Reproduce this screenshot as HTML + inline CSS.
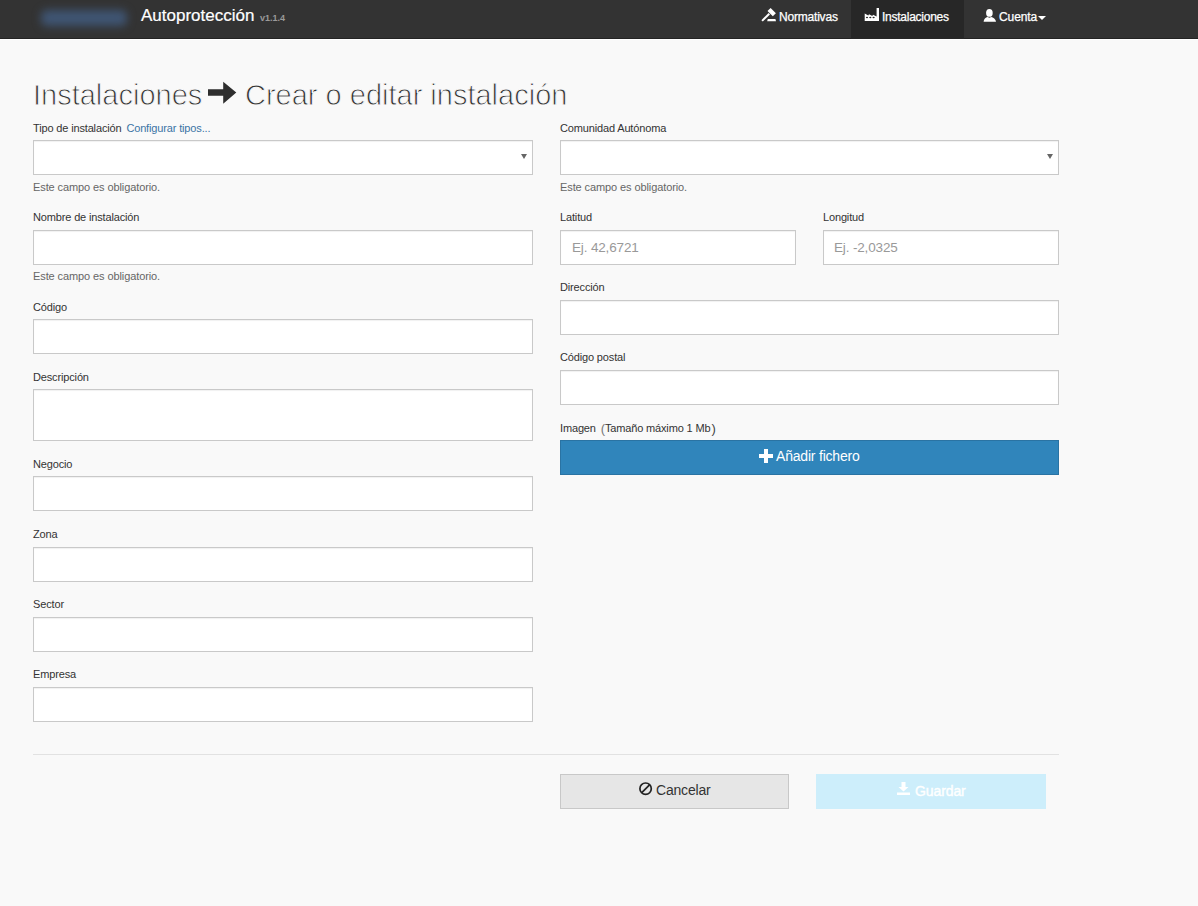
<!DOCTYPE html>
<html>
<head>
<meta charset="utf-8">
<style>
html,body{margin:0;padding:0;}
body{width:1198px;height:906px;overflow:hidden;background:#f9f9f9;position:relative;font-family:"Liberation Sans",sans-serif;color:#333;}
.a{position:absolute;white-space:nowrap;}
#nav{position:absolute;left:0;top:0;width:1198px;height:38px;background:#333;border-bottom:1px solid #242424;}
#navline{position:absolute;left:0;top:39px;width:1198px;height:1px;background:#fff;}
.logo{position:absolute;left:41px;top:10px;width:86px;height:16px;background:#3f5573;filter:blur(4px);border-radius:6px;}
.brand{font-size:17px;line-height:17px;color:#fff;-webkit-text-stroke:0.2px #fff;}
.ver{font-size:9px;line-height:9px;color:#9a9a9a;font-weight:bold;}
.nt{font-size:12px;line-height:12px;color:#fff;-webkit-text-stroke:0.25px #fff;}
.active{position:absolute;left:851px;top:0;width:113px;height:39px;background:#272727;}
h1{margin:0;font-weight:normal;font-size:29px;line-height:29px;color:#333;-webkit-text-stroke:0.9px #f9f9f9;}
.lbl{font-size:11px;line-height:11px;color:#333;letter-spacing:-0.15px;}
.help{font-size:11px;line-height:11px;color:#666;letter-spacing:-0.1px;}
.lnk{color:#3b74a5;margin-left:2px;}
.inp{position:absolute;box-sizing:border-box;background:#fff;border:1px solid #c9c9c9;box-shadow:inset 0 1px 1px rgba(0,0,0,.06);}
.ph{font-size:13.5px;line-height:14px;color:#999;letter-spacing:-0.15px;}
.caret{position:absolute;width:0;height:0;border-left:3px solid transparent;border-right:3px solid transparent;border-top:5px solid #666;}
</style>
</head>
<body>
<div id="nav"></div>
<div id="navline"></div>
<div class="logo"></div>
<div class="a brand" style="left:141px;top:7px;">Autoprotección</div>
<div class="a ver" style="left:260px;top:14px;">v1.1.4</div>

<div class="active"></div>
<!-- gavel icon -->
<svg class="a" style="left:758px;top:4px;" width="24" height="20" viewBox="0 0 24 20">
  <g fill="#fff">
    <polygon points="12.6,3.9 17.9,9.2 14.8,12.2 9.5,6.9"/>
    <polygon points="4.8,17.6 3.4,16.2 10.6,9.0 12.0,10.4"/>
    <polygon points="9.8,14.9 17.4,14.9 18,17.2 9.2,17.2"/>
  </g>
</svg>
<div class="a nt" style="left:779px;top:11px;letter-spacing:-0.2px;">Normativas</div>
<!-- factory icon -->
<svg class="a" style="left:860px;top:4px;" width="24" height="20" viewBox="0 0 24 20">
  <path fill="#fff" d="M4.7 16.9 V9.6 L8.3 11.6 L9 10.2 L12.3 12.1 L13 10.7 L16.6 12.6 V4 H19 V16.9 Z"/>
  <g fill="#2a2a2a"><ellipse cx="7" cy="13.5" rx="1.1" ry="0.7"/><ellipse cx="10.3" cy="13.5" rx="1.1" ry="0.7"/><ellipse cx="13.6" cy="13.5" rx="1.1" ry="0.7"/></g>
</svg>
<div class="a nt" style="left:882px;top:11px;letter-spacing:-0.25px;">Instalaciones</div>
<!-- user icon -->
<svg class="a" style="left:983px;top:9px;" width="14" height="13" viewBox="0 0 14 13">
  <g fill="#fff"><ellipse cx="6.4" cy="3.9" rx="3.3" ry="3.9"/><path d="M0.6 12.8 C0.8 9.6 2.6 8.6 4.6 7.9 L6.4 8.8 L8.2 7.9 C10.2 8.6 12.8 9.6 13 12.8 Z"/></g>
</svg>
<div class="a nt" style="left:999px;top:11px;letter-spacing:-0.1px;">Cuenta</div>
<div class="caret" style="left:1038px;top:16px;border-left:4px solid transparent;border-right:4px solid transparent;border-top:4px solid #fff;"></div>

<h1 class="a" style="left:33px;top:81px;">Instalaciones</h1>
<svg class="a" style="left:208px;top:81px;" width="30" height="24" viewBox="0 0 30 24">
  <path fill="#2e2e2e" d="M0 8.2 H15.2 V0.8 L28.3 11.6 L15.2 22.8 V14.8 H0 Z"/>
</svg>
<h1 class="a" style="left:245px;top:81px;">Crear o editar instalación</h1>

<!-- LEFT COLUMN -->
<div class="a lbl" style="left:33px;top:123px;">Tipo de instalación <span class="lnk">Configurar tipos...</span></div>
<div class="inp" style="left:33px;top:140px;width:500px;height:35px;"></div>
<div class="caret" style="left:521px;top:154px;"></div>
<div class="a help" style="left:33px;top:182px;">Este campo es obligatorio.</div>

<div class="a lbl" style="left:33px;top:212px;">Nombre de instalación</div>
<div class="inp" style="left:33px;top:230px;width:500px;height:35px;"></div>
<div class="a help" style="left:33px;top:271px;">Este campo es obligatorio.</div>

<div class="a lbl" style="left:33px;top:302px;">Código</div>
<div class="inp" style="left:33px;top:319px;width:500px;height:35px;"></div>

<div class="a lbl" style="left:33px;top:372px;">Descripción</div>
<div class="inp" style="left:33px;top:389px;width:500px;height:52px;"></div>

<div class="a lbl" style="left:33px;top:459px;">Negocio</div>
<div class="inp" style="left:33px;top:476px;width:500px;height:35px;"></div>

<div class="a lbl" style="left:33px;top:529px;">Zona</div>
<div class="inp" style="left:33px;top:547px;width:500px;height:35px;"></div>

<div class="a lbl" style="left:33px;top:599px;">Sector</div>
<div class="inp" style="left:33px;top:617px;width:500px;height:35px;"></div>

<div class="a lbl" style="left:33px;top:669px;">Empresa</div>
<div class="inp" style="left:33px;top:687px;width:500px;height:35px;"></div>

<!-- RIGHT COLUMN -->
<div class="a lbl" style="left:560px;top:123px;">Comunidad Autónoma</div>
<div class="inp" style="left:560px;top:140px;width:499px;height:35px;"></div>
<div class="caret" style="left:1047px;top:154px;"></div>
<div class="a help" style="left:560px;top:182px;">Este campo es obligatorio.</div>

<div class="a lbl" style="left:560px;top:212px;">Latitud</div>
<div class="inp" style="left:560px;top:230px;width:236px;height:35px;"></div>
<div class="a ph" style="left:572px;top:241px;">Ej. 42,6721</div>
<div class="a lbl" style="left:823px;top:212px;">Longitud</div>
<div class="inp" style="left:823px;top:230px;width:236px;height:35px;"></div>
<div class="a ph" style="left:834px;top:241px;">Ej. -2,0325</div>

<div class="a lbl" style="left:560px;top:282px;">Dirección</div>
<div class="inp" style="left:560px;top:300px;width:499px;height:35px;"></div>

<div class="a lbl" style="left:560px;top:352px;">Código postal</div>
<div class="inp" style="left:560px;top:370px;width:499px;height:35px;"></div>

<div class="a lbl" style="left:560px;top:422px;">Imagen <span style="color:#777;font-size:13px;margin-left:2px;position:relative;top:1px;">(</span>Tamaño máximo 1 Mb<span style="color:#444;font-size:13px;margin-left:1px;position:relative;top:1px;">)</span></div>
<div class="a" style="left:560px;top:440px;width:499px;height:35px;box-sizing:border-box;background:#3085bb;border:1px solid #2a73a3;"></div>
<svg class="a" style="left:759px;top:449px;" width="14" height="14" viewBox="0 0 14 14"><path fill="#fff" d="M5 0 H9 V5 H14 V9 H9 V14 H5 V9 H0 V5 H5 Z"/></svg>
<div class="a" style="left:776px;top:449px;font-size:14px;line-height:14px;color:#fff;letter-spacing:-0.2px;">Añadir fichero</div>

<!-- hr -->
<div class="a" style="left:33px;top:754px;width:1026px;height:1px;background:#e2e2e2;"></div>

<!-- buttons -->
<div class="a" style="left:560px;top:774px;width:229px;height:35px;box-sizing:border-box;background:#e6e6e6;border:1px solid #c8c8c8;"></div>
<svg class="a" style="left:639px;top:782px;" width="14" height="14" viewBox="0 0 14 14"><circle cx="6.6" cy="6.7" r="5.7" fill="none" stroke="#222" stroke-width="1.7"/><path d="M2.8 10.6 L10.5 2.9" stroke="#222" stroke-width="1.7"/></svg>
<div class="a" style="left:656px;top:783px;font-size:14px;line-height:14px;color:#333;letter-spacing:-0.2px;">Cancelar</div>

<div class="a" style="left:816px;top:774px;width:230px;height:35px;background:#cdeefb;"></div>
<svg class="a" style="left:897px;top:782px;" width="13" height="13" viewBox="0 0 13 13"><path fill="#fff" d="M4.5 0 H8.5 V5 H11.5 L6.5 9.5 L1.5 5 H4.5 Z M0 10.5 H13 V13 H0 Z"/></svg>
<div class="a" style="left:915px;top:784px;font-size:14px;line-height:14px;color:#fff;letter-spacing:-0.1px;-webkit-text-stroke:0.4px #fff;">Guardar</div>
</body>
</html>
